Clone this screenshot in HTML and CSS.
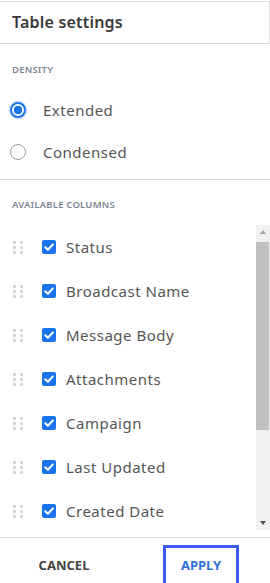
FILE: index.html
```html
<!DOCTYPE html>
<html lang="en">
<head>
  <meta charset="UTF-8">
  <title>Table settings</title>
  <link rel="stylesheet" href="styles.css">
</head>
<body>
  <div class="panel">
    <div class="header">Table settings</div>

    <div class="section density">
      <div class="label">DENSITY</div>
      <div class="radio-row">
        <span class="radio checked"></span>
        <span>Extended</span>
      </div>
      <div class="radio-row">
        <span class="radio"></span>
        <span>Condensed</span>
      </div>
    </div>

    <div class="section columns">
      <div class="label">AVAILABLE COLUMNS</div>
      <div class="list-wrap">
        <div class="list">
          <div class="col-row"><span class="grip"><i></i><i></i><i></i><i></i><i></i><i></i></span><span class="check"><svg viewBox="0 0 14 14" width="14" height="14"><path d="M3.2 7.2 L5.9 9.8 L10.9 4.4" fill="none" stroke="#fff" stroke-width="2" stroke-linecap="round" stroke-linejoin="round"/></svg></span><span class="name">Status</span></div>
          <div class="col-row"><span class="grip"><i></i><i></i><i></i><i></i><i></i><i></i></span><span class="check"><svg viewBox="0 0 14 14" width="14" height="14"><path d="M3.2 7.2 L5.9 9.8 L10.9 4.4" fill="none" stroke="#fff" stroke-width="2" stroke-linecap="round" stroke-linejoin="round"/></svg></span><span class="name">Broadcast Name</span></div>
          <div class="col-row"><span class="grip"><i></i><i></i><i></i><i></i><i></i><i></i></span><span class="check"><svg viewBox="0 0 14 14" width="14" height="14"><path d="M3.2 7.2 L5.9 9.8 L10.9 4.4" fill="none" stroke="#fff" stroke-width="2" stroke-linecap="round" stroke-linejoin="round"/></svg></span><span class="name">Message Body</span></div>
          <div class="col-row"><span class="grip"><i></i><i></i><i></i><i></i><i></i><i></i></span><span class="check"><svg viewBox="0 0 14 14" width="14" height="14"><path d="M3.2 7.2 L5.9 9.8 L10.9 4.4" fill="none" stroke="#fff" stroke-width="2" stroke-linecap="round" stroke-linejoin="round"/></svg></span><span class="name">Attachments</span></div>
          <div class="col-row"><span class="grip"><i></i><i></i><i></i><i></i><i></i><i></i></span><span class="check"><svg viewBox="0 0 14 14" width="14" height="14"><path d="M3.2 7.2 L5.9 9.8 L10.9 4.4" fill="none" stroke="#fff" stroke-width="2" stroke-linecap="round" stroke-linejoin="round"/></svg></span><span class="name">Campaign</span></div>
          <div class="col-row"><span class="grip"><i></i><i></i><i></i><i></i><i></i><i></i></span><span class="check"><svg viewBox="0 0 14 14" width="14" height="14"><path d="M3.2 7.2 L5.9 9.8 L10.9 4.4" fill="none" stroke="#fff" stroke-width="2" stroke-linecap="round" stroke-linejoin="round"/></svg></span><span class="name">Last Updated</span></div>
          <div class="col-row"><span class="grip"><i></i><i></i><i></i><i></i><i></i><i></i></span><span class="check"><svg viewBox="0 0 14 14" width="14" height="14"><path d="M3.2 7.2 L5.9 9.8 L10.9 4.4" fill="none" stroke="#fff" stroke-width="2" stroke-linecap="round" stroke-linejoin="round"/></svg></span><span class="name">Created Date</span></div>
        </div>
        <div class="scrollbar">
          <div class="arrow up"></div>
          <div class="thumb"></div>
          <div class="track-rest"></div>
          <div class="arrow down"></div>
        </div>
      </div>
    </div>

    <div class="footer">
      <div class="btn cancel">CANCEL</div>
      <div class="btn apply">APPLY</div>
    </div>
  </div>
</body>
</html>
```

FILE: styles.css
```css
* {
  margin: 0;
  padding: 0;
  box-sizing: border-box;
}

html, body {
  height: 100%;
  background-color: #fff;
  font-family: "Noto Sans", "Open Sans", Arial, sans-serif;
  color: #555;
  overflow: hidden;
}

.panel {
  width: 270px;
  margin-top: 1px;
  border-top: 1px solid #dcdcdc;
}

.header {
  height: 42px;
  line-height: 41px;
  padding-left: 12px;
  font-size: 16px;
  font-weight: 600;
  letter-spacing: 0.2px;
  color: #383838;
  border-bottom: 1px solid #d9d9d9;
  border-right: 1px solid #e2e2e2;
}

.label {
  height: 12px;
  line-height: 12px;
  padding-left: 12px;
  font-size: 9.5px;
  font-weight: 600;
  color: #7c8494;
  letter-spacing: 0.2px;
}

.density {
  padding-top: 20px;
  padding-bottom: 6px;
  border-bottom: 1px solid #dcdcdc;
}

.density .label {
  margin-bottom: 13px;
}

.radio-row {
  display: flex;
  align-items: center;
  height: 42px;
  padding-left: 10px;
  gap: 17px;
  font-size: 15px;
  letter-spacing: 0.5px;
}

.radio {
  width: 16px;
  height: 16px;
  border-radius: 50%;
  border: 1.5px solid #999;
  flex-shrink: 0;
}

.radio.checked {
  border: 2px solid #1a73e8;
  background: radial-gradient(circle, #1a73e8 0 4px, #fff 4.6px);
  box-shadow: 0 0 0 1.5px #cfe1fb;
}

.columns {
  padding-top: 19px;
  padding-bottom: 7px;
}

.columns .label {
  margin-bottom: 14px;
}

.list-wrap {
  display: flex;
  height: 305px;
}

.list {
  flex: 1;
  overflow: hidden;
}

.col-row {
  display: flex;
  align-items: center;
  height: 44px;
  padding-left: 13px;
  font-size: 15px;
  letter-spacing: 0.5px;
}

.grip {
  display: grid;
  grid-template-columns: 3px 3px;
  grid-auto-rows: 3px;
  column-gap: 4px;
  row-gap: 2px;
  width: 10px;
}

.grip i {
  display: block;
  width: 3px;
  height: 3px;
  border-radius: 1px;
  background-color: #d2d2d2;
}

.check {
  width: 14px;
  height: 14px;
  margin-left: 19px;
  margin-right: 10px;
  border-radius: 2px;
  background-color: #1a73e8;
  display: flex;
}

.scrollbar {
  width: 14px;
  background-color: #f1f1f1;
  display: flex;
  flex-direction: column;
}

.arrow {
  height: 14px;
  display: flex;
  align-items: center;
  justify-content: center;
}

.arrow::after {
  content: "";
  border-left: 3.5px solid transparent;
  border-right: 3.5px solid transparent;
}

.arrow.up::after {
  border-bottom: 4px solid #a3a3a3;
}

.arrow.down::after {
  border-top: 4px solid #505050;
}

.thumb {
  height: 188px;
  margin: 3px 1px 0 0;
  background-color: #c1c1c1;
}

.track-rest {
  flex: 1;
}

.footer {
  height: 60px;
  border-top: 1px solid #dcdcdc;
  display: flex;
  align-items: flex-start;
  padding-left: 20px;
  gap: 55px;
}

.btn {
  height: 48px;
  margin-top: 7px;
  display: flex;
  align-items: center;
  justify-content: center;
  padding-bottom: 8px;
  font-size: 13px;
  font-weight: 700;
}

.cancel {
  width: 88px;
  color: #444;
}

.apply {
  width: 76px;
  border: 3px solid #3d5cf2;
  color: #2f72d8;
}
```
